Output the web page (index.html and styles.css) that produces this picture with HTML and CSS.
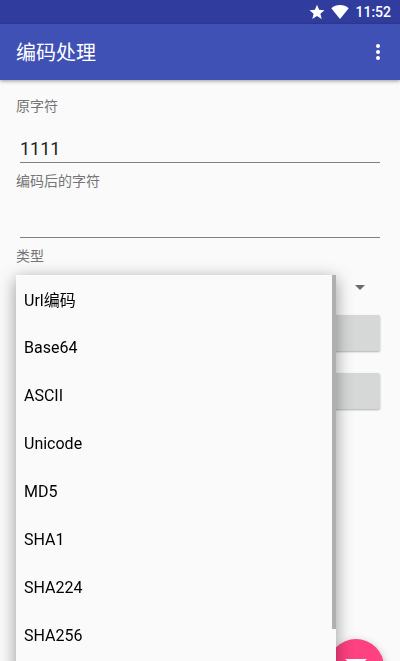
FILE: index.html
```html
<!DOCTYPE html>
<html lang="zh-CN">
<head>
    <meta charset="UTF-8">
    <meta name="viewport" content="width=device-width, initial-scale=1.0">
    <title>编码处理</title>
    <link rel="stylesheet" href="styles.css">
</head>
<body>
<div class="status-bar">
    <svg width="16" height="16" viewBox="0 0 16 16" fill="#fff" aria-hidden="true">
        <path d="M8 .8l2.1 5 5.4.4-4.1 3.5 1.3 5.2L8 12.1l-4.700 2.800 1.300-5.200L.5 6.200l5.400-.4z"/>
    </svg>
    <svg width="18" height="14" viewBox="0 0 18 14" fill="#fff" aria-hidden="true">
        <path d="M9 14L.3 3.200C2.700 1.100 5.700 0 9 0s6.300 1.100 8.700 3.200z"/>
    </svg>
    <span class="clock">11:52</span>
</div>
<header class="app-bar">
    <h1>编码处理</h1>
    <button type="button" class="more" aria-label="更多选项">
        <svg width="24" height="24" viewBox="0 0 24 24" fill="#fff" aria-hidden="true">
            <circle cx="12" cy="6" r="2"/>
            <circle cx="12" cy="12" r="2"/>
            <circle cx="12" cy="18" r="2"/>
        </svg>
    </button>
</header>
<main>
    <form>
        <label for="source">原字符</label>
        <input type="text" id="source" value="1111">

        <label for="result">编码后的字符</label>
        <input type="text" id="result">

        <label for="type">类型</label>
        <div class="spinner">
            <select id="type">
                <option>Url编码</option>
                <option>Base64</option>
                <option>ASCII</option>
                <option>Unicode</option>
                <option>MD5</option>
                <option>SHA1</option>
                <option>SHA224</option>
                <option>SHA256</option>
            </select>
            <svg class="arrow" width="10" height="5" viewBox="0 0 10 5" fill="#6b6b6b" aria-hidden="true">
                <path d="M0 0h10L5 5z"/>
            </svg>
            <!-- Opened drop-down list -->
            <div class="menu">
                <button type="button">Url编码</button>
                <button type="button">Base64</button>
                <button type="button">ASCII</button>
                <button type="button">Unicode</button>
                <button type="button">MD5</button>
                <button type="button">SHA1</button>
                <button type="button">SHA224</button>
                <button type="button">SHA256</button>
                <div class="scroll-thumb"></div>
            </div>
        </div>

        <button type="button" class="action" aria-label="编码"></button>
        <button type="button" class="action" aria-label="解码"></button>
    </form>
</main>
<button type="button" class="fab" aria-label="发送">
    <!-- Envelope: flap on top, body below -->
    <svg width="24" height="24" viewBox="0 0 24 24" fill="#fff" aria-hidden="true">
        <path d="M1 4h22L12 14z"/>
        <path d="M1 6l11 10L23 6v14H1z"/>
    </svg>
</button>
</body>
</html>
```

FILE: styles.css
```css
* {
    box-sizing: border-box;
}

body {
    margin: 0;
    min-height: 100vh;
    overflow: hidden;
    background-color: #fafafa;
    color: #000;
    font-family: Roboto, "Noto Sans CJK SC", sans-serif;
}

button,
input,
select {
    font-family: inherit;
    border: none;
}

button {
    cursor: pointer;
}

.status-bar {
    display: flex;
    align-items: center;
    justify-content: flex-end;
    gap: 6px;
    height: 24px;
    padding-right: 9px;
    background-color: #303d9f;
    color: #fff;
}

.clock {
    font-size: 14px;
    font-weight: 500;
}

.app-bar {
    display: flex;
    align-items: center;
    justify-content: space-between;
    height: 56px;
    padding: 0 10px 0 16px;
    background-color: #3f51b5;
    box-shadow: 0 1px 4px rgba(0, 0, 0, 0.4);
    color: #fff;
}

.app-bar h1 {
    margin: 0;
    padding-bottom: 2px;
    font-size: 20px;
    font-weight: 400;
}

.more {
    display: flex;
    padding: 0;
    background: none;
}

main {
    padding: 16px;
}

form {
    display: flex;
    flex-direction: column;
}

form label {
    color: #757575;
    font-size: 14px;
    line-height: 20px;
}

form input {
    height: 47px;
    margin: 0 4px 8px;
    padding: 18px 0 0;
    border-bottom: 1px solid #808080;
    background: none;
    color: #212121;
    font-size: 18px;
    outline: none;
}

.spinner {
    position: relative;
    z-index: 2;
    margin: 9px 0 16px;
}

.spinner select {
    display: block;
    width: 100%;
    height: 24px;
    padding: 0 8px;
    appearance: none;
    background: none;
    font-size: 16px;
}

.arrow {
    position: absolute;
    top: 10px;
    right: 19px;
}

.menu {
    position: absolute;
    top: 0;
    left: 0;
    right: 48px;
    padding-bottom: 16px;
    background-color: #fafafa;
    box-shadow: 0 4px 16px rgba(0, 0, 0, 0.4);
}

.menu button {
    display: block;
    width: 100%;
    height: 48px;
    padding: 0 8px;
    background: none;
    color: #000;
    font-size: 16px;
    text-align: left;
}

.scroll-thumb {
    position: absolute;
    top: 0;
    right: 0;
    width: 4px;
    height: 354px;
    background-color: #b0b0b0;
}

.action {
    height: 36px;
    margin: 0 4px 22px;
    border-radius: 2px;
    background-color: #d6d8d7;
    box-shadow: 0 1px 2px rgba(0, 0, 0, 0.3);
}

.fab {
    position: fixed;
    right: 16px;
    bottom: -34px;
    z-index: 1;
    display: flex;
    align-items: center;
    justify-content: center;
    width: 56px;
    height: 56px;
    padding: 0;
    border-radius: 50%;
    background-color: #ff4081;
    box-shadow: 0 3px 8px rgba(0, 0, 0, 0.3);
}
```
